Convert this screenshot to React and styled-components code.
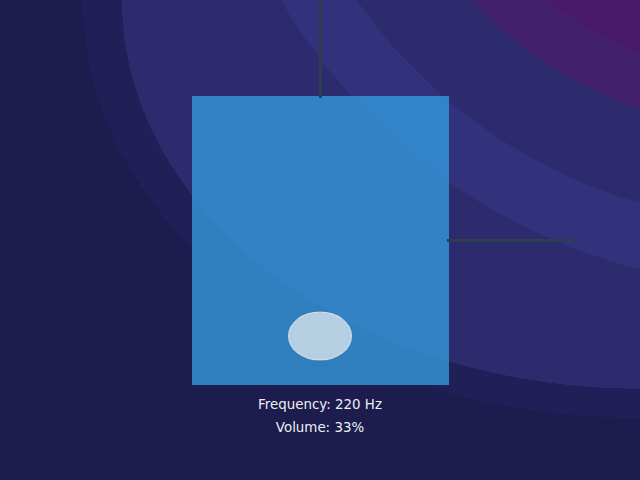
import React from 'react';
import styled, { createGlobalStyle } from 'styled-components';

const GlobalStyle = createGlobalStyle`
  html, body {
    margin: 0;
    padding: 0;
    background: #1c1c4e;
  }
  #root {
    width: 640px;
    height: 480px;
  }
`;

// two glows: a purple one off the top right, and the base ellipse
const Stage = styled.div`
  width: 640px;
  height: 480px;
  overflow: hidden;
  display: flex;
  flex-direction: column;
  align-items: center;
  font-family: "DejaVu Sans", Verdana, sans-serif;
  background:
    radial-gradient(circle at 783px -296px,
      #4a1a6a 0 378px,
      #42206a 378px 430px,
      transparent 430px 519px,
      #31317c 519px 583px,
      transparent 583px),
    radial-gradient(ellipse 905px 679px at 100% 0,
      #2d2a6e 0 518px,
      #211f58 518px 557px,
      #1c1c4e 557px);
`;

const PitchAntenna = styled.div`
  position: relative;
  z-index: 1;
  width: 3px;
  height: 98px;
  margin-bottom: -2px;
  background: #2c3e50;
`;

const Pad = styled.div`
  position: relative;
  width: 257px;
  height: 289px;
  margin-left: 1px;
  background: rgba(52, 152, 219, 0.8);
`;

const VolumeAntenna = styled.div`
  position: absolute;
  left: calc(100% - 2px);
  top: 143px;
  width: 131px;
  height: 3px;
  background: #2c3e50;
`;

const Hand = styled.div`
  position: absolute;
  box-sizing: border-box;
  width: 64px;
  height: 49px;
  border-radius: 50%;
  background: rgba(236, 240, 241, 0.7);
  border: 1px solid rgba(255, 255, 255, 0.35);
  transform: translate(-50%, -50%);
`;

const Readout = styled.div`
  margin-top: 8px;
  color: #ecf0f1;
  font-size: 13.4px;
  line-height: 23px;
  text-align: center;
`;

const Line = styled.div``;

export default function App() {
  const freq = 220;
  const volume = 33;
  const hand = { x: 128, y: 240 };

  return (
    <>
      <GlobalStyle />
      <Stage>
        <PitchAntenna />
        <Pad>
          <VolumeAntenna />
          <Hand style={{ left: hand.x, top: hand.y }} />
        </Pad>
        <Readout>
          <Line>Frequency: {freq} Hz</Line>
          <Line>Volume: {volume}%</Line>
        </Readout>
      </Stage>
    </>
  );
}
